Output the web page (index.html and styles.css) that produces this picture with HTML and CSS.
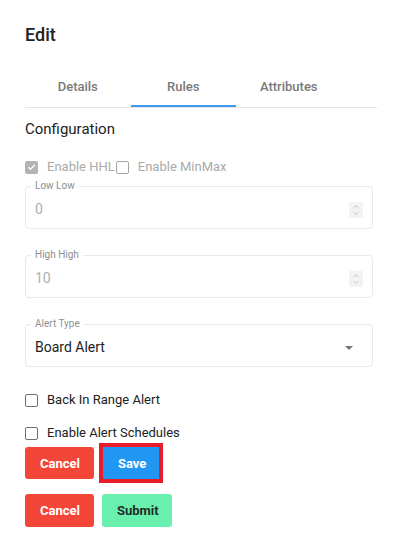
FILE: index.html
```html
<!DOCTYPE html>
<html lang="en">
<head>
<meta charset="utf-8">
<title>Edit</title>
<link rel="stylesheet" href="styles.css">
</head>
<body>
<div class="page">
  <h1 class="title">Edit</h1>

  <div class="tabs">
    <div class="tab">Details</div>
    <div class="tab active">Rules</div>
    <div class="tab">Attributes</div>
  </div>

  <h2 class="section">Configuration</h2>

  <div class="check-row inline">
    <label class="check disabled">
      <span class="box checked">
        <svg viewBox="0 0 12 12" width="12" height="12"><path d="M2.6 6.2 L5 8.5 L9.6 3.6" fill="none" stroke="#fff" stroke-width="1.5"/></svg>
      </span>
      <span class="check-label">Enable HHL</span>
    </label>
    <label class="check disabled tight">
      <span class="box"></span>
      <span class="check-label">Enable MinMax</span>
    </label>
  </div>

  <fieldset class="field disabled first">
    <legend>Low Low</legend>
    <div class="field-row">
      <span class="value">0</span>
      <span class="spinner">
        <svg viewBox="0 0 14 16" width="14" height="16"><path d="M4.5 6 L7 3.6 L9.5 6 M4.5 10 L7 12.4 L9.5 10" fill="none" stroke="#c4c4c4" stroke-width="1"/></svg>
      </span>
    </div>
  </fieldset>

  <fieldset class="field disabled">
    <legend>High High</legend>
    <div class="field-row">
      <span class="value">10</span>
      <span class="spinner">
        <svg viewBox="0 0 14 16" width="14" height="16"><path d="M4.5 6 L7 3.6 L9.5 6 M4.5 10 L7 12.4 L9.5 10" fill="none" stroke="#c4c4c4" stroke-width="1"/></svg>
      </span>
    </div>
  </fieldset>

  <fieldset class="field">
    <legend>Alert Type</legend>
    <div class="field-row">
      <span class="value dark">Board Alert</span>
      <span class="caret"></span>
    </div>
  </fieldset>

  <label class="check block first-block">
    <span class="box dark"></span>
    <span class="check-label dark">Back In Range Alert</span>
  </label>
  <label class="check block second-block">
    <span class="box dark"></span>
    <span class="check-label dark">Enable Alert Schedules</span>
  </label>

  <div class="btn-row row1">
    <button class="btn cancel">Cancel</button>
    <button class="btn save">Save</button>
  </div>
  <div class="btn-row row2">
    <button class="btn cancel">Cancel</button>
    <button class="btn submit">Submit</button>
  </div>
</div>
</body>
</html>
```

FILE: styles.css
```css
* { box-sizing: border-box; }
html, body { margin: 0; padding: 0; background: #fff; }
body { font-family: Roboto, "Noto Sans", Arial, sans-serif; color: #222; }

.page {
  width: 400px;
  padding: 24px 23px 0 25px;
  display: flex;
  flex-direction: column;
}

.title {
  margin: 0;
  font-size: 18px;
  line-height: 22px;
  font-weight: 500;
  color: #222;
}

.tabs {
  margin-top: 20px;
  display: flex;
  border-bottom: 1px solid #e4e4e4;
}
.tab {
  width: 105.5px;
  height: 41px;
  display: flex;
  align-items: center;
  justify-content: center;
  font-size: 13px;
  font-weight: 500;
  color: #7a7a7a;
  border-bottom: 2px solid transparent;
  padding-top: 1px;
}
.tab.active { border-bottom-color: #3d9cf0; }

.section {
  margin: 12px 0 0;
  font-size: 15px;
  line-height: 18px;
  font-weight: 400;
  color: #222;
}

.check-row.inline {
  margin-top: 20px;
  display: flex;
  align-items: center;
  height: 18px;
}
.check {
  display: flex;
  align-items: center;
  font-size: 13px;
  line-height: 18px;
}
.check.tight { margin-left: 1px; }
.box {
  width: 13px;
  height: 13px;
  border: 1.5px solid #a6a6a6;
  border-radius: 2px;
  display: flex;
  align-items: center;
  justify-content: center;
  margin-right: 9px;
  flex: none;
}
.box.checked {
  background: #b4b4b4;
  border-color: #b4b4b4;
}
.box.dark { border-color: #6f6f6f; }
.check-label { color: #a9a9a9; }
.check-label.dark { color: #222; }

.field {
  margin: 4px 0 0;
  padding: 0 4px 0 5px;
  min-width: 0;
  width: 348px;
  border: 1px solid #e8e8e8;
  border-radius: 4px;
}
.field + .field { margin-top: 20px; }
.field legend {
  font-size: 10px;
  line-height: 12px;
  padding: 0 4px;
  color: #8f8f8f;
}
.field-row {
  height: 34px;
  margin-bottom: 2px;
  display: flex;
  align-items: center;
  justify-content: space-between;
  padding-left: 4px;
  padding-right: 5px;
}
.value {
  font-size: 14px;
  color: #b0b0b0;
}
.value.dark { color: #222; }
.spinner {
  width: 14px;
  height: 16px;
  background: #f3f3f3;
  display: block;
  margin-top: 1px;
}
.spinner svg { display: block; }
.caret {
  width: 0;
  height: 0;
  border-left: 4px solid transparent;
  border-right: 4px solid transparent;
  border-top: 4px solid #757575;
  margin-right: 10px;
  margin-top: 1px;
}

.check.block { height: 18px; }
.first-block { margin-top: 24px; }
.second-block { margin-top: 15px; }

.btn-row {
  display: flex;
  gap: 8px;
}
.row1 { margin-top: 5px; }
.row2 { margin-top: 15px; }
.btn {
  height: 32px;
  padding: 0 15px;
  border: none;
  border-radius: 3px;
  font-family: Roboto, Arial, sans-serif;
  font-size: 13px;
  font-weight: 700;
  color: #fff;
}
.cancel { background: #f44539; width: 69px; }
.save {
  background: #2196f3;
  border-radius: 0;
  width: 56px;
  margin-left: 1px;
  outline: 4px solid #e91c2a;
}
.submit {
  background: #6af0ae;
  color: #1f2d25;
  width: 70px;
  height: 33px;
}
.row2 .cancel { height: 33px; }
```
